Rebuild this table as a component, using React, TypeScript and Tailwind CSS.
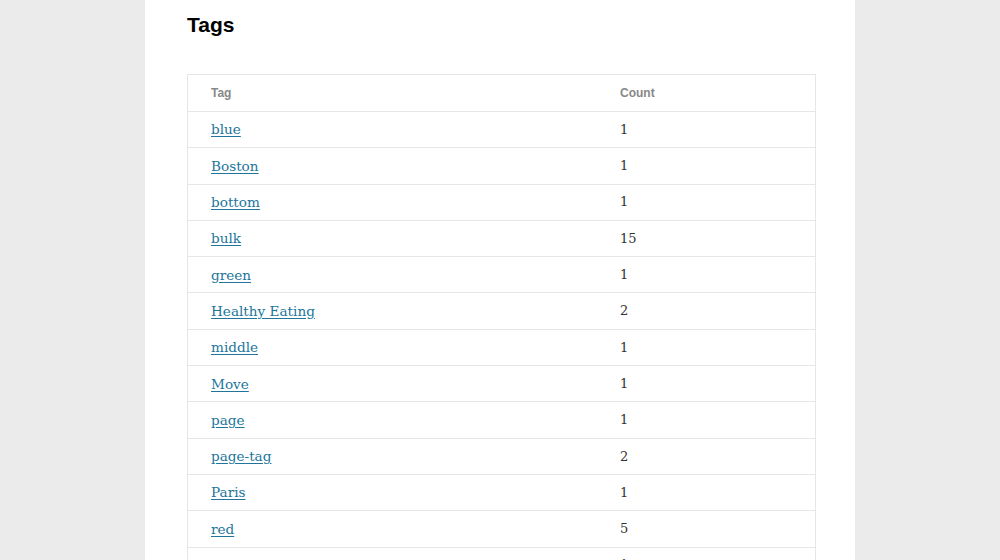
const tags: { name: string; count: number }[] = [
  { name: "blue", count: 1 },
  { name: "Boston", count: 1 },
  { name: "bottom", count: 1 },
  { name: "bulk", count: 15 },
  { name: "green", count: 1 },
  { name: "Healthy Eating", count: 2 },
  { name: "middle", count: 1 },
  { name: "Move", count: 1 },
  { name: "page", count: 1 },
  { name: "page-tag", count: 2 },
  { name: "Paris", count: 1 },
  { name: "red", count: 5 },
  { name: "seaside", count: 1 },
];

export default function App() {
  return (
    <div className="h-[560px] overflow-hidden bg-[#ebebeb] flex justify-center">
      <main className="w-[710px] bg-white pl-[42px] pr-[40px] pt-[11px]">
        <h1 className="text-[21px] font-bold text-black font-['Liberation_Sans',Arial,sans-serif] leading-[28px]">
          Tags
        </h1>
        <div className="mt-[35px] border border-[#e6e6e6] w-[629px]">
          <div className="flex h-[36px] items-center text-[12px] font-bold text-[#888] font-['Liberation_Sans',Arial,sans-serif]">
            <div className="w-[408px] pl-[23px]">Tag</div>
            <div className="pl-[24px]">Count</div>
          </div>
          {tags.map((t) => (
            <div
              key={t.name}
              className="flex h-[36.3px] items-center border-t border-[#e6e6e6] font-['DejaVu_Serif',Georgia,serif] text-[13.6px]"
            >
              <div className="w-[408px] pl-[23px]">
                <a href="#" className="text-[#21759b] underline underline-offset-2">
                  {t.name}
                </a>
              </div>
              <div className="pl-[24px] text-[#333] text-[13px]">{t.count}</div>
            </div>
          ))}
        </div>
      </main>
    </div>
  );
}
